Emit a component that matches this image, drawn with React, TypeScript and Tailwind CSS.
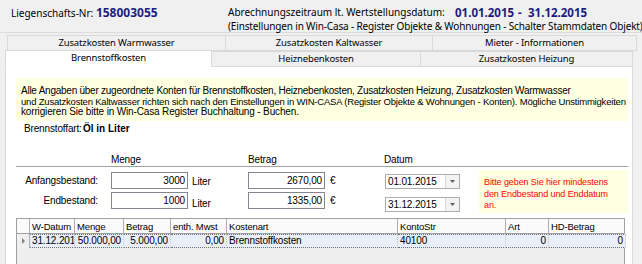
import React from "react";

const cols = [
  { w: 13, h: "", v: "", a: "left" },
  { w: 45, h: "W-Datum", v: "31.12.201", a: "left" },
  { w: 49, h: "Menge", v: "50.000,00", a: "right" },
  { w: 47, h: "Betrag", v: "5.000,00", a: "right" },
  { w: 56, h: "enth. Mwst", v: "0,00", a: "right" },
  { w: 171, h: "Kostenart", v: "Brennstoffkosten", a: "left" },
  { w: 108, h: "KontoStr", v: "40100", a: "left" },
  { w: 43, h: "Art", v: "0", a: "right" },
  { w: 77, h: "HD-Betrag", v: "0", a: "right" },
];

function Tab({ w, label, active }: { w: number; label: string; active?: boolean }) {
  return (
    <div
      style={{ width: w }}
      className={
        "flex items-center justify-center border border-[#d9d9d9] -ml-px first:ml-0 whitespace-nowrap " +
        (active ? "bg-white border-b-white h-[17px] -mt-px z-10" : "bg-[#f0f0f0] h-[16px]")
      }
    >
      {label}
    </div>
  );
}

function Dropdown({ value }: { value: string }) {
  return (
    <div className="w-[75px] h-[15px] border border-[#abadb3] bg-white flex">
      <div className="flex-1 pl-[2px] leading-[13px] text-[10px]">{value}</div>
      <div className="w-[14px] border-l border-[#d8d8d8] bg-[#f3f3f3] flex items-center justify-center">
        <svg width="5" height="3" viewBox="0 0 5 3">
          <path d="M0 0 L5 0 L2.5 3 Z" fill="#606060" />
        </svg>
      </div>
    </div>
  );
}

function Box({ v }: { v: string }) {
  return (
    <div className="w-[77px] h-[17px] border border-[#828790] bg-white text-right pr-[2px] text-[10px] leading-[15px]">{v}</div>
  );
}

export default function App() {
  return (
    <div className="w-[642px] h-[264px] overflow-hidden bg-[#f0f0f0] text-black flex flex-col font-['Noto_Sans',sans-serif]">
      {/* header */}
      <div className="h-[33px] shrink-0 flex border-b border-[#dcdcdc] text-[10px] leading-[13px]">
        <div className="w-[228px] shrink-0 pl-[11px] pt-[6px] whitespace-nowrap">
          Liegenschafts-Nr: <span className="font-bold text-[12px] text-[#1c1c80]">158003055</span>
        </div>
        <div className="pt-[6px] whitespace-nowrap">
          <div className="flex items-center">
            <span className="w-[227px] shrink-0">Abrechnungszeitraum lt. Wertstellungsdatum:</span>
            <span className="font-bold text-[11.5px] text-[#1c1c80] w-[63px] shrink-0">01.01.2015</span>
            <span className="font-bold text-[11.5px] text-[#1c1c80] w-[10px] shrink-0">-</span>
            <span className="font-bold text-[11.5px] text-[#1c1c80]">31.12.2015</span>
          </div>
          <div className="mt-[1px] tracking-[-0.15px]">(Einstellungen in Win-Casa - Register Objekte &amp; Wohnungen - Schalter Stammdaten Objekt)</div>
        </div>
      </div>

      {/* tabs row 1 */}
      <div className="mt-[2px] ml-[7px] flex text-[9.5px] tracking-[-0.15px] shrink-0">
        <Tab w={219} label="Zusatzkosten Warmwasser" />
        <Tab w={208} label="Zusatzkosten Kaltwasser" />
        <Tab w={205} label="Mieter -  Informationen" />
      </div>
      {/* tabs row 2 */}
      <div className="ml-[5px] flex text-[9.5px] tracking-[-0.15px] shrink-0 relative">
        <Tab w={207} label="Brennstoffkosten" active />
        <Tab w={210} label="Heiznebenkosten" />
        <Tab w={213} label="Zusatzkosten Heizung" />
      </div>

      {/* panel */}
      <div className="ml-[5px] w-[628px] flex-1 bg-white border-x border-[#d9d9d9] -mt-px border-t border-t-[#d9d9d9] font-['Liberation_Sans',Arial,sans-serif] text-[10px] tracking-[-0.15px]">
        <div className="mt-[11px] ml-[10px] w-[612px] h-[43px] bg-[#ffffe1] pl-[5px] pt-[8px] leading-[10.5px] whitespace-nowrap">
          <div className="tracking-[-0.25px]">Alle Angaben über zugeordnete Konten für Brennstoffkosten, Heiznebenkosten, Zusatzkosten Heizung, Zusatzkosten Warmwasser</div>
          <div className="text-[9.5px] tracking-[-0.2px]">und Zusatzkosten Kaltwasser richten sich nach den Einstellungen in WIN-CASA (Register Objekte &amp; Wohnungen - Konten). Mögliche Unstimmigkeiten</div>
          <div>korrigieren Sie bitte in Win-Casa Register Buchhaltung - Buchen.</div>
        </div>

        <div className="h-[15px] flex items-center pl-[18px]">
          <span className="w-[59px]">Brennstoffart:</span>
          <span className="font-bold text-[10px] tracking-normal">Öl in Liter</span>
        </div>

        <div className="mt-[16px] ml-[10px] w-[612px] h-[15px] border-b border-[#a0a0a0] flex items-center">
          <span className="ml-[95px] w-[137px]">Menge</span>
          <span className="w-[136px]">Betrag</span>
          <span>Datum</span>
        </div>

        <div className="flex">
          <div className="flex flex-col">
            <div className="mt-[5px] h-[17px] flex items-center">
              <span className="w-[92px] text-right">Anfangsbestand:</span>
              <div className="ml-[13px]">
                <Box v="3000" />
              </div>
              <span className="ml-[4px] w-[56px] mt-[2px]">Liter</span>
              <Box v="2670,00" />
              <span className="ml-[5px] w-[55px]">€</span>
              <div className="self-end">
                <Dropdown value="01.01.2015" />
              </div>
            </div>
            <div className="mt-[3px] h-[17px] flex items-center">
              <span className="w-[92px] text-right">Endbestand:</span>
              <div className="ml-[13px]">
                <Box v="1000" />
              </div>
              <span className="ml-[4px] w-[56px] mt-[6px]">Liter</span>
              <Box v="1335,00" />
              <span className="ml-[5px] w-[55px]">€</span>
              <div className="mt-[8px]">
                <Dropdown value="31.12.2015" />
              </div>
            </div>
          </div>
          <div className="ml-[19px] mt-[3px] w-[149px] h-[43px] bg-[#ffffe1] text-[#ff0000] pl-[5px] pt-[7px] text-[9px] tracking-[-0.1px] leading-[11.5px] whitespace-nowrap">
            Bitte geben Sie hier mindestens
            <br />
            den Endbestand und Enddatum
            <br />
            an.
          </div>
        </div>

        {/* grid */}
        <div className="mt-[5px] ml-[10px] w-[609px] h-[60px] border border-[#a0a0a0] bg-[#eeeeee] text-[9.5px]">
          <div className="flex h-[15px] bg-[#fafafa] border-b border-[#a0a0a0]">
            {cols.map((c, i) => (
              <div
                key={i}
                style={{ width: c.w }}
                className="shrink-0 border-r border-[#b0b0b0] last:border-r-0 pl-[2px] leading-[15px] whitespace-nowrap overflow-hidden"
              >
                {c.h}
              </div>
            ))}
          </div>
          <div className="flex h-[14px]">
            {cols.map((c, i) =>
              i === 0 ? (
                <div key={i} style={{ width: c.w }} className="shrink-0 bg-[#f0f0f0] border-r border-[#b0b0b0] flex items-center justify-center">
                  <svg width="3" height="6" viewBox="0 0 3 6">
                    <path d="M0 0 L3 3 L0 6 Z" fill="#808080" />
                  </svg>
                </div>
              ) : (
                <div
                  key={i}
                  style={{ width: c.w }}
                  className={
                    "shrink-0 bg-[#e9eff8] border-y border-dotted border-[#707070] border-r border-r-[#c8c8c8] px-[2px] leading-[12px] whitespace-nowrap overflow-hidden text-[10px] " +
                    (c.a === "right" ? "text-right" : "text-left")
                  }
                >
                  {c.v}
                </div>
              )
            )}
          </div>
        </div>
      </div>
    </div>
  );
}
